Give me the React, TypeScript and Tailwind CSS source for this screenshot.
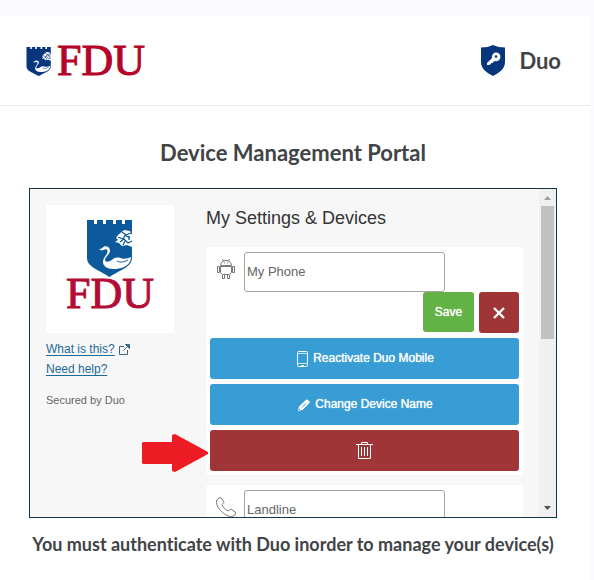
import type { ReactNode } from "react";

function Swan({ fill }: { fill: string }) {
  return (
    <g>
      <path d="M0 0h7v4h3V0h6v4h3V0h7v4h3V0h6v4h3V0h7v38c0 9-12 12-22.500 19C12 50 0 47 0 38z" fill={fill} />
      <path
        d="M12 29c2 .5 3-1 5-2.500 3-1 6 1 6 4 0 4-5 6-5 9.500 0 2 3 2 5 1 3-1 3-3 7-3.500 2 0 4 .5 5 1 3 .5 6 0 9-1.500 0 5-3 8-7 10-3 1.500-7 2-11 2-6 0-10-3-10-7 0-5 4.500-7 4.500-11 0-2-2-2-4-1-1.500.7-3 .5-4.500-1z"
        fill="#fff"
      />
      <path d="M30 41c4 2 7 1 11-1" stroke={fill} fill="none" />
      <path d="M31 15l6-5 6 1 2 4v12l-5-2-5 1-3-3-4-1 3-2-2-2z" fill="#fff" />
      <path
        d="M31 17l5 2 3-5M35 12l4 3 5-2M33 22l4-3 4 4 4-2M39 16l4 2M36 25l2-4M42 16v4"
        fill="none"
        stroke={fill}
        strokeWidth="1.300"
      />
    </g>
  );
}

function HeaderLogo() {
  return (
    <svg width="128" height="52" viewBox="0 0 128 52" role="img" aria-label="FDU">
      <g transform="translate(.5 12) scale(.54 .51)">
        <Swan fill="#08367c" />
      </g>
      <text x="31" y="40" fontSize="44" className="font-['Liberation_Serif',serif]" fill="#b50427" stroke="#b50427">
        FDU
      </text>
    </svg>
  );
}

function PanelLogo() {
  return (
    <svg width="128" height="128" viewBox="0 0 128 128" className="bg-white" role="img" aria-label="FDU">
      <g transform="translate(41 15)">
        <Swan fill="#0c5a9b" />
      </g>
      <text x="20" y="103" fontSize="44" className="font-['Liberation_Serif',serif]" fill="#b30d36" stroke="#b30d36">
        FDU
      </text>
    </svg>
  );
}

function DuoShield() {
  return (
    <svg width="24" height="31" viewBox="0 0 24 31" aria-hidden="true">
      <path d="M0 2.500Q7 2.500 12 0q5 2.500 12 2.500V17c0 7-6 11-12 14C6 28 0 24 0 17z" fill="#08367c" />
      <path d="M6 20v-2l5-5a4.300 4.300 0 1 1 3 3l-2 1v1h-2v1l-2 1z" fill="#fff" />
      <circle cx="15" cy="11.500" r="1.300" fill="#08367c" />
    </svg>
  );
}

function AndroidIcon() {
  return (
    <svg width="18" height="20" viewBox="0 0 18 20" fill="none" stroke="#777" aria-hidden="true">
      <path d="M3.500 6.500C3.500 3.500 6 1.500 9 1.500s5.500 2 5.500 5zM5.500 0l1 2M12.500 0l-1 2M7 4h1M10 4h1M3.500 7.500h11v6l-2 2h-7l-2-2z" />
      <path d="M.5 7.500h2v6h-2zM15.500 7.500h2v6h-2zM5.500 16v3.500h2V16M10.500 16v3.500h2V16" />
    </svg>
  );
}

function PhoneIcon() {
  return (
    <svg width="20" height="20" viewBox="0 0 20 20" fill="none" stroke="#777" aria-hidden="true">
      <path d="M2 1.500L5 .5l3 5-2 2c1 3 3.500 5.500 6.500 6.500l2-2 5 3-.5 3c-2 2-5 2-8 .5C6 16 2 11 .7 7 0 4.500.5 3 2 1.500z" />
    </svg>
  );
}

function MobileIcon() {
  return (
    <svg width="11" height="16" viewBox="0 0 11 16" fill="none" stroke="#fff" aria-hidden="true">
      <rect x=".5" y=".5" width="10" height="15" rx="1" />
      <path d="M1 2.500h9M1 12.500h9M4 14.500h3" strokeOpacity=".75" />
    </svg>
  );
}

function PencilIcon() {
  return (
    <svg width="12" height="12" viewBox="0 0 12 12" aria-hidden="true">
      <path d="M0 12l1-4.500L8 .7Q9 0 10 1l1.300 1.300q.9 1-.1 2L4.500 11z" fill="#fff" />
      <path d="M4 8.500l3.800-3.800M1 10l1 1" stroke="#379dd4" fill="none" />
    </svg>
  );
}

function TrashIcon() {
  return (
    <svg width="17" height="17" viewBox="0 0 17 17" fill="none" stroke="#fff" aria-hidden="true">
      <path d="M0 2.500h17M5.500 2V.5h6V2M2.500 3v13.500h12V3M5.500 5v9M8.500 5v9M11.500 5v9" />
    </svg>
  );
}

function ExternalIcon() {
  return (
    <svg width="11" height="11" viewBox="0 0 11 11" fill="none" stroke="#3a6482" aria-hidden="true">
      <path d="M5 2.500H.5v8h8V6M4.500 6.500l5-5" />
      <path d="M6.500.5h4v4z" fill="#3a6482" />
    </svg>
  );
}

function WideButton({ children, tone, label }: { children: ReactNode; tone: "blue" | "red"; label?: string }) {
  return (
    <button
      type="button"
      aria-label={label}
      className={`flex h-[41px] w-full items-center justify-center gap-[5px] rounded-[3px] text-xs text-white [text-shadow:0_0_1px_#fff] ${
        tone === "blue" ? "bg-[#379dd4] pl-0.5" : "bg-[#9f3537]"
      }`}
    >
      {children}
    </button>
  );
}

function DeviceName({ icon, label, name }: { icon: ReactNode; label: string; name: string }) {
  return (
    <div className="flex pt-px">
      <div className="flex w-[34px] justify-center pt-[7px] pr-0.5">{icon}</div>
      <input
        aria-label={label}
        defaultValue={name}
        className="h-10 w-[201px] rounded-[3px] border border-[#a3a3a3] bg-white px-0.5 pb-0.5 text-[13px] text-[#666]"
      />
    </div>
  );
}

function Scrollbar() {
  return (
    <div className="flex w-[17px] shrink-0 flex-col items-center bg-[#f0f0f0]" aria-hidden="true">
      <svg width="17" height="17" viewBox="0 0 17 17">
        <path d="M5 11h7L8.500 7z" fill="#a0a0a0" />
      </svg>
      <div className="h-[133px] w-[13px] bg-[#c1c1c1]" />
      <svg width="17" height="17" viewBox="0 0 17 17" className="mt-auto">
        <path d="M5 6h7l-3.500 4z" fill="#505050" />
      </svg>
    </div>
  );
}

function DuoPanel() {
  return (
    <section className="flex h-[330px] overflow-hidden border border-[#12354b] bg-[#f7f7f7] font-['Liberation_Sans',Arial,sans-serif]">
      <div className="flex min-w-0 flex-1 gap-8 px-4 pt-4">
        <aside className="w-32 shrink-0">
          <PanelLogo />
          <nav className="mt-1.5 text-xs leading-5 text-[#1d6a98]">
            <div className="flex items-center gap-1">
              <a href="#what" className="underline underline-offset-2">What is this?</a>
              <ExternalIcon />
            </div>
            <a href="#help" className="underline underline-offset-2">Need help?</a>
          </nav>
          <p className="mt-[13px] text-[11px] leading-4 text-[#666]">Secured by Duo</p>
        </aside>
        <div className="min-w-0 flex-1">
          <h2 className="pt-px text-lg leading-6 text-[#333]">My Settings &amp; Devices</h2>
          <div className="mt-[17px] rounded-[3px] bg-white p-1">
            <DeviceName icon={<AndroidIcon />} label="Mobile device name" name="My Phone" />
            <div className="mb-[5px] flex justify-end gap-[5px]">
              <button type="button" className="h-10 w-[51px] rounded-[3px] bg-[#63b246] text-xs text-white [text-shadow:0_0_1px_#fff]">
                Save
              </button>
              <button type="button" aria-label="Cancel" className="flex h-[41px] w-10 items-center justify-center rounded-[3px] bg-[#9f3537]">
                <svg width="12" height="12" viewBox="0 0 12 12" aria-hidden="true">
                  <path d="M1 1l10 10M11 1L1 11" stroke="#fff" strokeWidth="2.400" />
                </svg>
              </button>
            </div>
            <div className="flex flex-col gap-[5px]">
              <WideButton tone="blue">
                <MobileIcon />
                <span className="pb-0.5">Reactivate Duo Mobile</span>
              </WideButton>
              <WideButton tone="blue">
                <PencilIcon />
                <span className="pb-0.5">Change Device Name</span>
              </WideButton>
              <div className="relative">
                <WideButton tone="red" label="Delete device">
                  <TrashIcon />
                </WideButton>
                <svg width="67" height="38" viewBox="0 0 67 38" className="absolute top-1 right-full mr-px" aria-hidden="true">
                  <path d="M1 8h29V1l3-1 33 18v2L33 38l-3-1v-7H1l-1-1V9z" fill="#ed1c24" />
                </svg>
              </div>
            </div>
          </div>
          <div className="mt-2.5 rounded-[3px] bg-white p-1">
            <DeviceName icon={<PhoneIcon />} label="Landline device name" name="Landline" />
          </div>
        </div>
      </div>
      <Scrollbar />
    </section>
  );
}

export default function App() {
  return (
    <div className="min-h-screen bg-[#fafafc] pt-4 pr-1 font-[Lato,sans-serif] text-[#414447] [font-variant-ligatures:none]">
      <main className="min-h-[564px] rounded-tr bg-white">
        <header className="flex h-[90px] items-center justify-between border-b border-[#e8e9f0] pr-[29px] pl-[26px]">
          <HeaderLogo />
          <div className="flex items-center gap-3.5">
            <DuoShield />
            <span className="text-[22px] leading-7 font-bold">Duo</span>
          </div>
        </header>
        <div className="pt-[33px] pr-[33px] pl-[29px]">
          <h1 className="mb-[21px] text-center text-[22px] leading-7 font-bold">Device Management Portal</h1>
          <DuoPanel />
          <p className="mt-3.5 text-center text-lg leading-6 font-bold whitespace-nowrap">
            You must authenticate with Duo inorder to manage your device(s)
          </p>
        </div>
      </main>
    </div>
  );
}
